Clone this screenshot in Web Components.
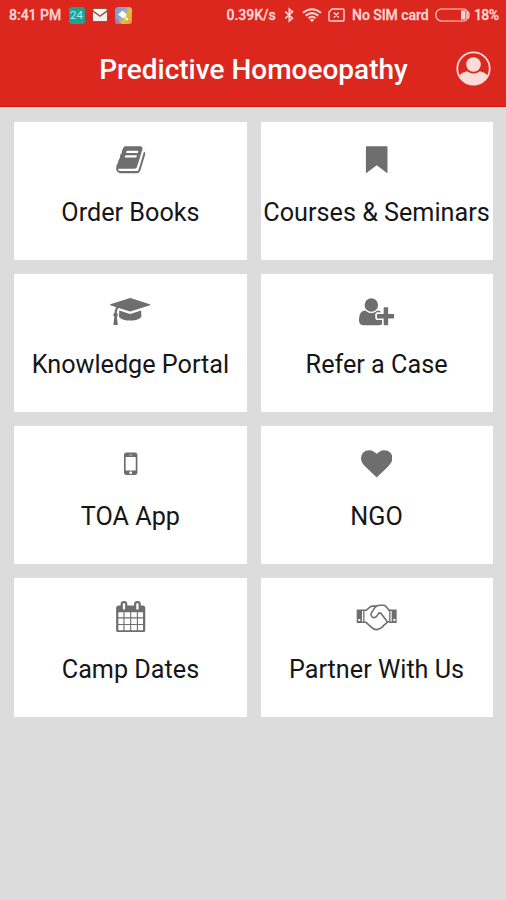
<!DOCTYPE html>
<html lang="en">
<head>
<meta charset="utf-8">
<meta name="viewport" content="width=device-width, initial-scale=1">
<title>Predictive Homoeopathy</title>
<style>
    html, body { margin: 0; height: 100%; }
    body { background: #dcdcdc; font-family: Roboto, "Liberation Sans", sans-serif; overflow: hidden; }
</style>
</head>
<body>
<app-header heading="Predictive Homoeopathy">
    <status-bar slot="status" time="8:41 PM" speed="0.39K/s" carrier="No SIM card" battery="18%"></status-bar>
</app-header>
<menu-grid>
    <menu-card icon="book" label="Order Books"></menu-card>
    <menu-card icon="bookmark" label="Courses &amp; Seminars"></menu-card>
    <menu-card icon="graduation" label="Knowledge Portal"></menu-card>
    <menu-card icon="userPlus" label="Refer a Case"></menu-card>
    <menu-card icon="mobile" label="TOA App"></menu-card>
    <menu-card icon="heart" label="NGO"></menu-card>
    <menu-card icon="calendar" label="Camp Dates"></menu-card>
    <menu-card icon="handshake" label="Partner With Us"></menu-card>
</menu-grid>

<script>
// Card icons: [viewBox, markup]
const ICONS = {
    book: ['0 0 1792 1792', '<path d="M1703 478q40 57 18 129l-275 906q-19 64-76.5 107.5t-122.5 43.5h-923q-77 0-148.5-53.5t-99.5-131.5q-24-67-2-127 0-4 3-27t4-37q1-8-3-21.5t-3-19.5q2-11 8-21t16.5-23.5 16.5-23.5q23-38 45-91.5t30-91.5q3-10 .5-30t-.5-28q3-11 17-28t17-23q21-36 42-92t25-90q1-9-2.5-32t.5-28q4-13 22-30.5t22-22.5q19-26 42.5-84.5t27.5-96.5q1-8-3-25.5t-2-26.5q2-8 9-18t18-23 17-21q8-12 16.5-30.5t15-35 16-36 19.5-32 26.5-23.5 36-11.5 47.5 5.5l-1 3q38-9 51-9h761q74 0 114 56t18 130l-274 906q-36 119-71.5 153.5t-128.5 34.5h-869q-27 0-38 15-11 16-1 43 24 70 144 70h923q29 0 56-15.5t35-41.5l300-987q7-22 5-57 38 15 59 43zm-1064 2q-4 13 2 22.5t20 9.5h608q13 0 25.5-9.5t16.5-22.5l21-64q4-13-2-22.5t-20-9.5h-608q-13 0-25.5 9.5t-16.5 22.5zm-83 256q-4 13 2 22.5t20 9.5h608q13 0 25.5-9.5t16.5-22.5l21-64q4-13-2-22.5t-20-9.5h-608q-13 0-25.5 9.5t-16.5 22.5z"/>'],
    bookmark: ['0 0 1792 1792', '<path d="M320 128h1152q40 0 40 40v1470q0 30-30 20L896 1210l-586 448q-30 10-30-20V168q0-40 40-40z"/>'],
    graduation: ['0 -128 2304 1792', '<path d="M1774 700l18 316q4 69-82 128t-235 93.5-323 34.5-323-34.5-235-93.5-82-128l18-316 574 181q22 7 48 7t48-7zm530-324q0 23-22 31l-1120 352q-4 1-10 1t-10-1l-652-206q-43 34-71 111.5t-34 178.5q63 36 63 109 0 69-58 107l58 433q2 14-8 25-9 11-24 11h-192q-15 0-24-11-10-11-8-25l58-433q-58-38-58-107 0-73 65-111 11-207 98-330l-333-104q-22-8-22-31t22-31l1120-352q4-1 10-1t10 1l1120 352q22 8 22 31z"/>'],
    userPlus: ['0 0 2048 1792', '<path d="M704 896q-159 0-271.5-112.5t-112.5-271.5 112.5-271.5 271.5-112.5 271.5 112.5 112.5 271.5-112.5 271.5-271.5 112.5zm960 128h352q13 0 22.5 9.5t9.5 22.5v192q0 13-9.5 22.5t-22.5 9.5h-352v352q0 13-9.5 22.5t-22.5 9.5h-192q-13 0-22.5-9.5t-9.5-22.5v-352h-352q-13 0-22.5-9.5t-9.5-22.5v-192q0-13 9.5-22.5t22.5-9.5h352v-352q0-13 9.5-22.5t22.5-9.5h192q13 0 22.5 9.5t9.5 22.5v352zm-736 224q0 52 38 90t90 38h256v238q-68 50-171 50h-874q-121 0-194-69t-73-190q0-53 3.5-103.5t14-109 26.5-108.5 43-97.5 62-81 85.5-53.5 111.5-20q19 0 39 17 79 61 154.5 91.5t164.5 30.5 164.5-30.5 154.5-91.5q20-17 39-17 132 0 217 96h-223q-52 0-90 38t-38 90v192z"/>'],
    mobile: ['0 0 1792 1792', '<path d="M976 1408q0-33-23.5-56.5t-56.5-23.5-56.5 23.5-23.5 56.5 23.5 56.5 56.5 23.5 56.5-23.5 23.5-56.5zm208-160v-704q0-13-9.5-22.5t-22.5-9.5h-512q-13 0-22.5 9.5t-9.5 22.5v704q0 13 9.5 22.5t22.5 9.5h512q13 0 22.5-9.5t9.5-22.5zm-192-848q0-16-16-16h-160q-16 0-16 16t16 16h160q16 0 16-16zm288-16v1024q0 52-38 90t-90 38h-512q-52 0-90-38t-38-90v-1024q0-52 38-90t90-38h512q52 0 90 38t38 90z"/>'],
    heart: ['0 0 1792 1792', '<path d="M896 1664q-26 0-44-18l-624-602q-10-8-27.5-26t-55.5-65.5-68-97.5-53.5-121-23.5-138q0-220 127-344t351-124q62 0 126.5 21.5t120 58 95.5 68.5 76 68q36-36 76-68t95.5-68.5 120-58 126.5-21.5q224 0 351 124t127 344q0 221-229 450l-623 600q-18 18-44 18z"/>'],
    calendar: ['0 0 1792 1792', '<path d="M192 1664h288v-288h-288v288zm352 0h320v-288h-320v288zm-352-352h288v-320h-288v320zm352 0h320v-320h-320v320zm-352-384h288v-288h-288v288zm736 736h320v-288h-320v288zm-384-736h320v-288h-320v288zm768 736h288v-288h-288v288zm-384-352h320v-320h-320v320zm-352-864v-288q0-13-9.5-22.5t-22.5-9.5h-64q-13 0-22.5 9.5t-9.5 22.5v288q0 13 9.5 22.5t22.5 9.5h64q13 0 22.5-9.5t9.5-22.5zm736 864h288v-320h-288v320zm-384-384h320v-288h-320v288zm384 0h288v-288h-288v288zm32-480v-288q0-13-9.5-22.5t-22.5-9.5h-64q-13 0-22.5 9.5t-9.5 22.5v288q0 13 9.5 22.5t22.5 9.5h64q13 0 22.5-9.5t9.5-22.5zm384-64v1280q0 52-38 90t-90 38h-1408q-52 0-90-38t-38-90v-1280q0-52 38-90t90-38h128v-96q0-66 47-113t113-47h64q66 0 113 47t47 113v96h384v-96q0-66 47-113t113-47h64q66 0 113 47t47 113v96h128q52 0 90 38t38 90z"/>'],
    handshake: ['0 0 41.4 31.4', `
        <g fill="none" stroke="currentColor" stroke-width="1.6" stroke-linejoin="round" stroke-linecap="round">
            <path d="M8.6 9.3H10l4.2-3.4q1-.8 2.4-.8h3.6q2-.8 3.6-.8h3.4q1.7 0 2.7 1l3.100 4h.6M8.6 21.300h1.500l5.400 5q3.800 3.400 7.400 1.800 3.600-1.500 5.500-4.300 1.800-1.200 3.200-3h1.400"/>
            <path d="M20.5 5.200q-1.200.7-2.300 2.400l-2.900 4.500q-1 2 .7 3.700 2.400 1.800 4.600-.4l2.400-3.500 1.800.4 5.300 6.700q1 1.200.9 2.200"/>
        </g>
        <path d="M.7 8.600h7.800v13.400H.7zM33.200 8.600h7.500v13.400h-7.500z"/>
        <path fill="#fff" d="M6 9.900h1.200v10.700H6zM34.500 9.900h1.200v10.700h-1.200zM2.300 18.100h2v2h-2zM37.400 18.100h2v2h-2z"/>`]
};

// --- STATUS BAR ---
class StatusBar extends HTMLElement {
    constructor() {
        super();
        this.attachShadow({ mode: 'open' });
    }

    connectedCallback() {
        const attr = name => this.getAttribute(name) || '';

        this.shadowRoot.innerHTML = `
            <style>
                :host {
                    display: flex; align-items: center; justify-content: space-between;
                    height: 30px; padding: 0 8px 0 9px; box-sizing: border-box;
                    color: #fdd6d2; font-size: 14px; font-weight: 500; line-height: 30px;
                    white-space: nowrap; -webkit-text-stroke: 0.3px #fdd6d2;
                }
                .group { display: flex; align-items: center; }
                .notices { gap: 7px; }
                .time { width: 52.5px; }
                .speed { width: 57px; }
                .carrier { width: 83px; letter-spacing: -0.05px; }
                .level { width: 24px; letter-spacing: -0.6px; }
                svg { display: block; flex: none; }
                .badge {
                    width: 16px; height: 17px; border-radius: 3px;
                    background: #20a198; color: #a9eee5; -webkit-text-stroke: 0;
                    font-size: 11.5px; font-weight: 400; line-height: 17px; text-align: center;
                }
            </style>

            <div class="group notices">
                <span class="time">${attr('time')}</span>
                <span class="badge">24</span>
                <svg width="16" height="16" viewBox="0 0 16 16">
                    <rect x=".5" y="1" width="15" height="14" rx="2" fill="#8d5a40"/>
                    <path fill="#f5eeea" d="M1 5l7 5 7-5v9H1z"/>
                    <path fill="#fffaf5" d="M1.5 2h13v1.500L8 8.300 1.500 3.500z"/>
                </svg>
                <svg width="17" height="17" viewBox="0 0 17 17">
                    <defs>
                        <linearGradient id="g" x1="0" y1=".2" x2="1" y2=".8">
                            <stop offset="0" stop-color="#6aa0e8"/><stop offset=".4" stop-color="#93a4c4"/>
                            <stop offset=".65" stop-color="#d9c445"/><stop offset="1" stop-color="#f09a35"/>
                        </linearGradient>
                    </defs>
                    <rect width="17" height="17" rx="3" fill="url(#g)"/>
                    <path fill="#a668b8" opacity=".7" d="M0 11l7 6H3q-3 0-3-3z"/>
                    <path fill="#fff" d="M7.5 3.500l4 4-1 3-3 .5-4.500-3.500zM11 10.500l2.500 1.500-1 1.500-2.500-1.500z"/>
                </svg>
            </div>
            <div class="group">
                <span class="speed">${attr('speed')}</span>
                <svg width="11" height="16" viewBox="0 0 11 16" fill="none" stroke="currentColor" stroke-width="1.6">
                    <path d="M1.3 4.600l7.200 6.600L5.300 14V2l3.200 2.800-7.200 6.600"/>
                </svg>
                <svg style="margin-left:7px" width="20" height="16" viewBox="0 0 20 16" fill="none" stroke="currentColor" stroke-width="2">
                    <path d="M1 5.800q9-7.200 18 0M3.700 8.600q6.300-5 12.600 0M6.400 11.200q3.600-2.800 7.200 0"/>
                    <path fill="currentColor" stroke="none" d="M10 15.200l-2.300-2.600q2.300-1.500 4.600 0z"/>
                </svg>
                <svg style="margin:0 7.5px 0 6px" width="17" height="16" viewBox="0 0 17 16" fill="none" stroke="currentColor" stroke-width="1.4">
                    <path d="M4 2h11q1 0 1 1v10q0 1-1 1H2q-1 0-1-1V5zM5.800 5.600l5 5M10.800 5.600l-5 5"/>
                </svg>
                <span class="carrier">${attr('carrier')}</span>
                <svg style="margin-right:4px" width="35" height="16" viewBox="0 0 35 16">
                    <path fill="none" stroke="currentColor" stroke-width="1.2" d="M5.500 2H29q2 0 2.800 2 2.300.4 2.300 4T31.800 12q-.8 2-2.800 2H5.500Q.8 12.500.8 8t4.700-6z"/>
                    <path fill="currentColor" d="M26 3.600h4.500v8.800H26zM31.300 5h1.500q.8 3 0 6h-1.500z"/>
                </svg>
                <span class="level">${attr('battery')}</span>
            </div>
        `;
    }
}
customElements.define('status-bar', StatusBar);


// --- HEADER ---
class AppHeader extends HTMLElement {
    constructor() {
        super();
        this.attachShadow({ mode: 'open' });
    }

    connectedCallback() {
        this.shadowRoot.innerHTML = `
            <style>
                :host {
                    display: block; height: 107px; box-sizing: border-box;
                    background: #dc271f; border-bottom: 1px solid #d3180c;
                }
                .bar {
                    display: grid; grid-template-columns: 52px 1fr 51px;
                    align-items: center; height: 76px;
                }
                h1 {
                    grid-column: 2; margin: 4px 0 0; text-align: center; white-space: nowrap;
                    color: #fff; font-size: 28px; font-weight: 500; line-height: 36px;
                }
                svg { display: block; margin-left: 0.5px; }
            </style>
            <slot name="status"></slot>
            <div class="bar">
                <h1>${this.getAttribute('heading') || ''}</h1>
                <svg width="35" height="35" viewBox="0 0 35 35">
                    <circle cx="17.5" cy="17.5" r="16.2" fill="none" stroke="#fbdcd9" stroke-width="1.8"/>
                    <circle cx="17.5" cy="13.5" r="7.3" fill="#fbdcd9"/>
                    <path fill="#fbdcd9" d="M3.500 24.300q2.500-3.200 7.500-4 6.500 4.600 13 0 5 .8 7.500 4Q27 33.300 17.500 33.300T3.500 24.300z"/>
                </svg>
            </div>
        `;
    }
}
customElements.define('app-header', AppHeader);


// --- CARD (icon + label) ---
class MenuCard extends HTMLElement {
    constructor() {
        super();
        this.attachShadow({ mode: 'open' });
    }

    connectedCallback() {
        const [viewBox, shape] = ICONS[this.getAttribute('icon')];

        this.shadowRoot.innerHTML = `
            <style>
                :host {
                    display: flex; flex-direction: column; align-items: center;
                    box-sizing: border-box; padding-top: 22.3px; background: #fff;
                }
                svg { display: block; height: 31.4px; color: #6e6e6e; fill: currentColor; }
                .label {
                    margin-top: 20.5px; color: #161616; white-space: nowrap;
                    font-size: 25.2px; line-height: 34px;
                }
            </style>
            <svg viewBox="${viewBox}">${shape}</svg>
            <span class="label">${this.getAttribute('label') || ''}</span>
        `;
    }
}
customElements.define('menu-card', MenuCard);


// --- GRID (container) ---
class MenuGrid extends HTMLElement {
    constructor() {
        super();
        this.attachShadow({ mode: 'open' });
    }

    connectedCallback() {
        this.shadowRoot.innerHTML = `
            <style>
                :host {
                    display: grid; grid-template-columns: 1fr 1fr; grid-auto-rows: 138.3px;
                    gap: 14px; padding: 14.5px 13.4px 14px 14.4px;
                }
            </style>
            <slot></slot>
        `;
    }
}
customElements.define('menu-grid', MenuGrid);
</script>
</body>
</html>
